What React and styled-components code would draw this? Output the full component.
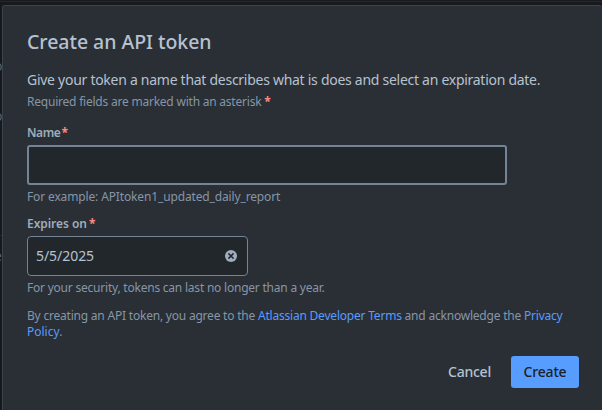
import React from 'react';
import styled, { createGlobalStyle } from 'styled-components';

const GlobalStyle = createGlobalStyle`
  * { box-sizing: border-box; }
  body { margin: 0; background: #17191c; overflow: hidden; font-family: 'Noto Sans', 'Open Sans', sans-serif; }
`;

const Page = styled.div`
  position: relative;
  width: 602px;
  height: 410px;
  padding: 5px 0 0 2px;
  overflow: hidden;
  background: #17191c;
`;

const PageRule = styled.div`
  position: absolute;
  left: 0;
  top: ${(p) => p.$top}px;
  width: 100%;
  height: 1px;
  background: #24272b;
`;

const PageText = styled.span`
  position: absolute;
  left: -6px;
  top: ${(p) => p.$top}px;
  font-size: 14px;
  line-height: 16px;
  color: #5a6067;
`;

const Dialog = styled.section`
  position: relative;
  display: flex;
  flex-direction: column;
  width: 600px;
  height: 420px;
  padding: 24px 23px 0 24px;
  border: 1px solid #3b444d;
  border-right: 0;
  border-radius: 3px;
  background: #2a2e35;
`;

const Line = styled.span`
  display: block;
  white-space: pre;
  letter-spacing: ${(p) => p.$track || 0}px;
`;

const Title = styled.h1`
  margin: 0;
  height: 24px;
  font-size: 19.5px;
  line-height: 24px;
  font-weight: 500;
  color: #b6c2cf;
`;

const Intro = styled.p`
  margin: 16px 0 0;
  font-size: 14px;
  line-height: 20px;
  color: #b6c2cf;
`;

const Hint = styled.p`
  margin: ${(p) => p.$gap}px 0 0;
  font-size: 12px;
  line-height: 16px;
  color: #8696a7;
`;

const Label = styled.label`
  display: flex;
  margin-top: ${(p) => p.$gap}px;
  font-size: 12px;
  line-height: 16px;
  font-weight: 600;
  color: #9fadbc;
`;

const Asterisk = styled.span`
  margin-left: ${(p) => p.$gap || 0}px;
  color: #fd8b83;
  font-weight: 700;
  letter-spacing: 0;
`;

const NameInput = styled.input`
  width: 480px;
  height: 40px;
  margin: 4px 0 0;
  padding: 0 8px;
  border: 2px solid #738496;
  border-radius: 3px;
  outline: 0;
  background: #22272b;
  color: #b6c2cf;
  font: inherit;
`;

const DateField = styled.div`
  display: flex;
  align-items: center;
  justify-content: space-between;
  width: 221px;
  height: 40px;
  margin-top: 4px;
  padding: 0 10px 0 8px;
  border: 1px solid #738496;
  border-radius: 4px;
  background: #22272b;
  color: #b6c2cf;
  font-size: 14px;
  line-height: 20px;
`;

const ClearIcon = styled.svg`
  width: 12px;
  height: 12px;
`;

const TermsLink = styled.a`
  color: #579dff;
  text-decoration: none;
`;

const Footer = styled.footer`
  display: flex;
  justify-content: flex-end;
  gap: 8px;
  margin-top: 16px;
`;

const Button = styled.button`
  display: flex;
  align-items: center;
  justify-content: center;
  width: ${(p) => (p.$primary ? 68 : 67)}px;
  height: 32px;
  padding: 0;
  border: 0;
  border-radius: 3px;
  background: ${(p) => (p.$primary ? '#579dff' : 'transparent')};
  color: ${(p) => (p.$primary ? '#1d2125' : '#b6c2cf')};
  font: 500 14px/20px 'Noto Sans', sans-serif;
`;

export default function App() {
  return (
    <>
      <GlobalStyle />
      <Page>
        <PageRule $top={1} />
        <PageRule $top={235} />
        <PageText $top={58}>o</PageText>
        <PageText $top={108}>o</PageText>
        <PageText $top={248}>e</PageText>
        <Dialog role="dialog" aria-labelledby="dialog-title">
          <Title id="dialog-title"><Line $track={-0.03}>Create an API token</Line></Title>
          <Intro><Line $track={-0.275}>Give your token a name that describes what is does and select an expiration date.</Line></Intro>
          <Hint $gap={4}><Line $track={-0.22}>Required fields are marked with an asterisk <Asterisk>*</Asterisk></Line></Hint>
          <Label $gap={15} htmlFor="name"><Line $track={-0.4}>Name</Line><Asterisk $gap={1}>*</Asterisk></Label>
          <NameInput id="name" />
          <Hint $gap={4}><Line $track={-0.14}>For example: APItoken1_updated_daily_report</Line></Hint>
          <Label $gap={11}><Line $track={-0.05}>Expires on</Line><Asterisk $gap={2}>*</Asterisk></Label>
          <DateField>
            <Line $track={-0.05}>5/5/2025</Line>
            <ClearIcon viewBox="0 0 12 12" aria-label="Clear">
              <circle cx="6" cy="6" r="6" fill="#9fadbc" />
              <path d="M4 4 8 8M8 4 4 8" stroke="#22272b" strokeWidth="1.6" strokeLinecap="square" />
            </ClearIcon>
          </DateField>
          <Hint $gap={4}><Line $track={-0.22}>For your security, tokens can last no longer than a year.</Line></Hint>
          <Hint $gap={12}>
            <Line $track={-0.21}>By creating an API token, you agree to the <TermsLink>Atlassian Developer Terms</TermsLink> and acknowledge the <TermsLink>Privacy</TermsLink></Line>
            <Line $track={0}><TermsLink>Policy</TermsLink>.</Line>
          </Hint>
          <Footer>
            <Button><Line $track={-0.25}>Cancel</Line></Button>
            <Button $primary><Line $track={-0.2}>Create</Line></Button>
          </Footer>
        </Dialog>
      </Page>
    </>
  );
}
